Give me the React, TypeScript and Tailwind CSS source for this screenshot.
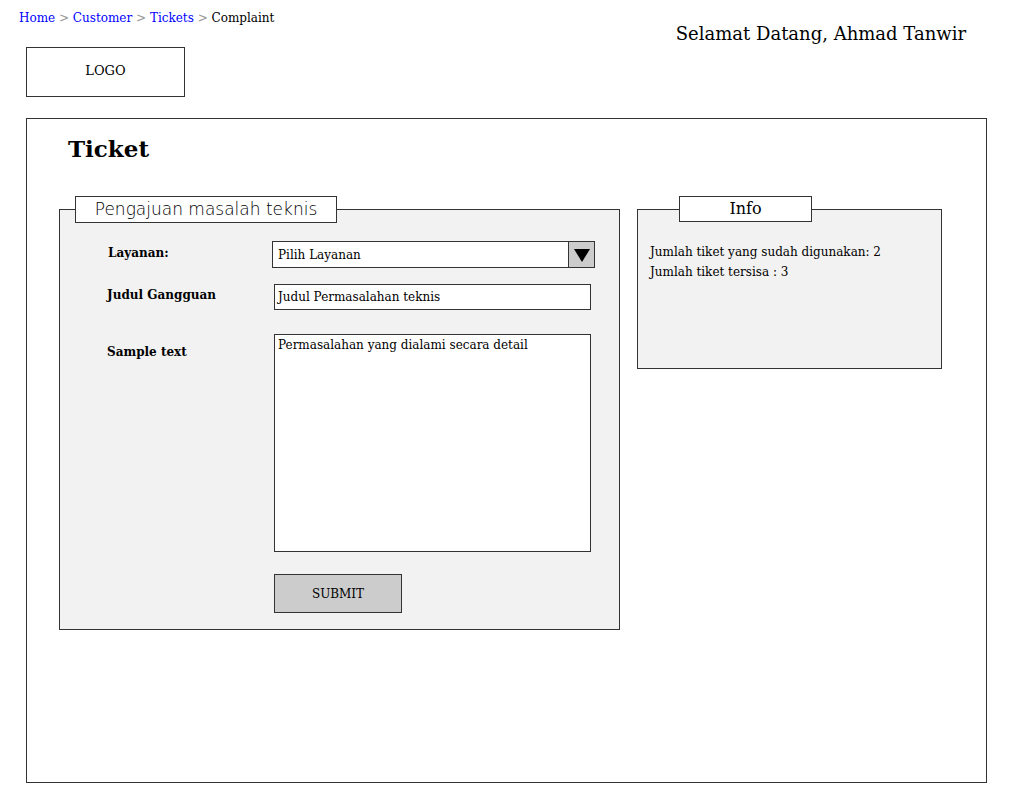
import React from "react";

const serif = { fontFamily: '"DejaVu Serif", "Liberation Serif", serif' };

export default function App() {
  return (
    <div className="w-[1024px] h-[800px] bg-white text-black relative" style={serif}>
      {/* TOP BAR */}
      <div className="flex">
        <div className="pl-[19px] pt-[10px]">
          <div className="h-[14px] text-[12px] leading-[16px] whitespace-nowrap">
            <span className="text-[#0000ff]">Home</span>
            <span className="text-[#999]"> &gt; </span>
            <span className="text-[#0000ff]">Customer</span>
            <span className="text-[#999]"> &gt; </span>
            <span className="text-[#0000ff]">Tickets</span>
            <span className="text-[#999]"> &gt; </span>
            <span>Complaint</span>
          </div>
          <div className="mt-[23px] ml-[7px] w-[159px] h-[50px] border border-[#333] flex items-center justify-center text-[13px] pb-[3px]">
            LOGO
          </div>
        </div>
        <div className="ml-auto mr-[58px] pt-[24px] text-[18px] leading-[20px]">
          Selamat Datang, Ahmad Tanwir
        </div>
      </div>

      {/* MAIN */}
      <div className="ml-[26px] mt-[21px] w-[961px] h-[665px] border border-[#333]">
        <h1 className="ml-[41px] mt-[17px] text-[23px] leading-[26px] font-bold">Ticket</h1>

        <div className="flex items-start mt-[33px] ml-[32px]">
          {/* LEFT FIELDSET */}
          <div className="relative w-[561px] h-[421px] mt-[14px] bg-[#f2f2f2] border border-[#333]">
            <div
              className="absolute left-[15px] top-[-14px] w-[262px] h-[27px] bg-white border border-[#333] flex items-center justify-center text-[17px] text-black"
              style={{ fontFamily: '"DejaVu Sans", sans-serif', fontWeight: 300 }}
            >
              Pengajuan masalah teknis
            </div>

            <div className="pt-[31px] pl-[48px]">
              <div className="flex items-center h-[27px]">
                <div className="w-[164px] text-[12px] font-bold -mt-[4px]">Layanan:</div>
                <div className="flex w-[323px] h-[27px] border border-[#333] bg-white">
                  <div className="flex-1 text-[12px] pl-[5px] flex items-center">Pilih Layanan</div>
                  <div className="w-[26px] bg-[#cccccc] border-l border-[#333] flex items-center justify-center">
                    <svg width="16" height="14" viewBox="0 0 16 14">
                      <polygon points="0,1 16,1 8,14" fill="#000" />
                    </svg>
                  </div>
                </div>
              </div>

              <div className="flex items-center h-[26px] mt-[16px]">
                <div className="w-[167px] text-[12px] font-bold -mt-[4px] -ml-[1px]">Judul Gangguan</div>
                <div className="w-[317px] h-[26px] border border-[#333] bg-white text-[12px] pl-[3px] flex items-center">
                  Judul Permasalahan teknis
                </div>
              </div>

              <div className="flex items-start mt-[24px]">
                <div className="w-[167px] text-[12px] font-bold mt-[9px] -ml-[1px]">Sample text</div>
                <div className="w-[317px] h-[218px] border border-[#333] bg-white text-[12px] pl-[3px] pt-[1px]">
                  Permasalahan yang dialami secara detail
                </div>
              </div>

              <div className="ml-[166px] mt-[22px] w-[128px] h-[39px] bg-[#cccccc] border border-[#333] flex items-center justify-center text-[12px]">
                SUBMIT
              </div>
            </div>
          </div>

          {/* INFO FIELDSET */}
          <div className="relative ml-[17px] mt-[14px] w-[305px] h-[160px] bg-[#f2f2f2] border border-[#333]">
            <div className="absolute left-[41px] top-[-14px] w-[133px] h-[26px] bg-white border border-[#333] flex items-center justify-center text-[16px]">
              Info
            </div>
            <div className="pt-[32px] pl-[12px] text-[12px] leading-[20px]">
              <div>Jumlah tiket yang sudah digunakan: 2</div>
              <div>Jumlah tiket tersisa : 3</div>
            </div>
          </div>
        </div>
      </div>
    </div>
  );
}
